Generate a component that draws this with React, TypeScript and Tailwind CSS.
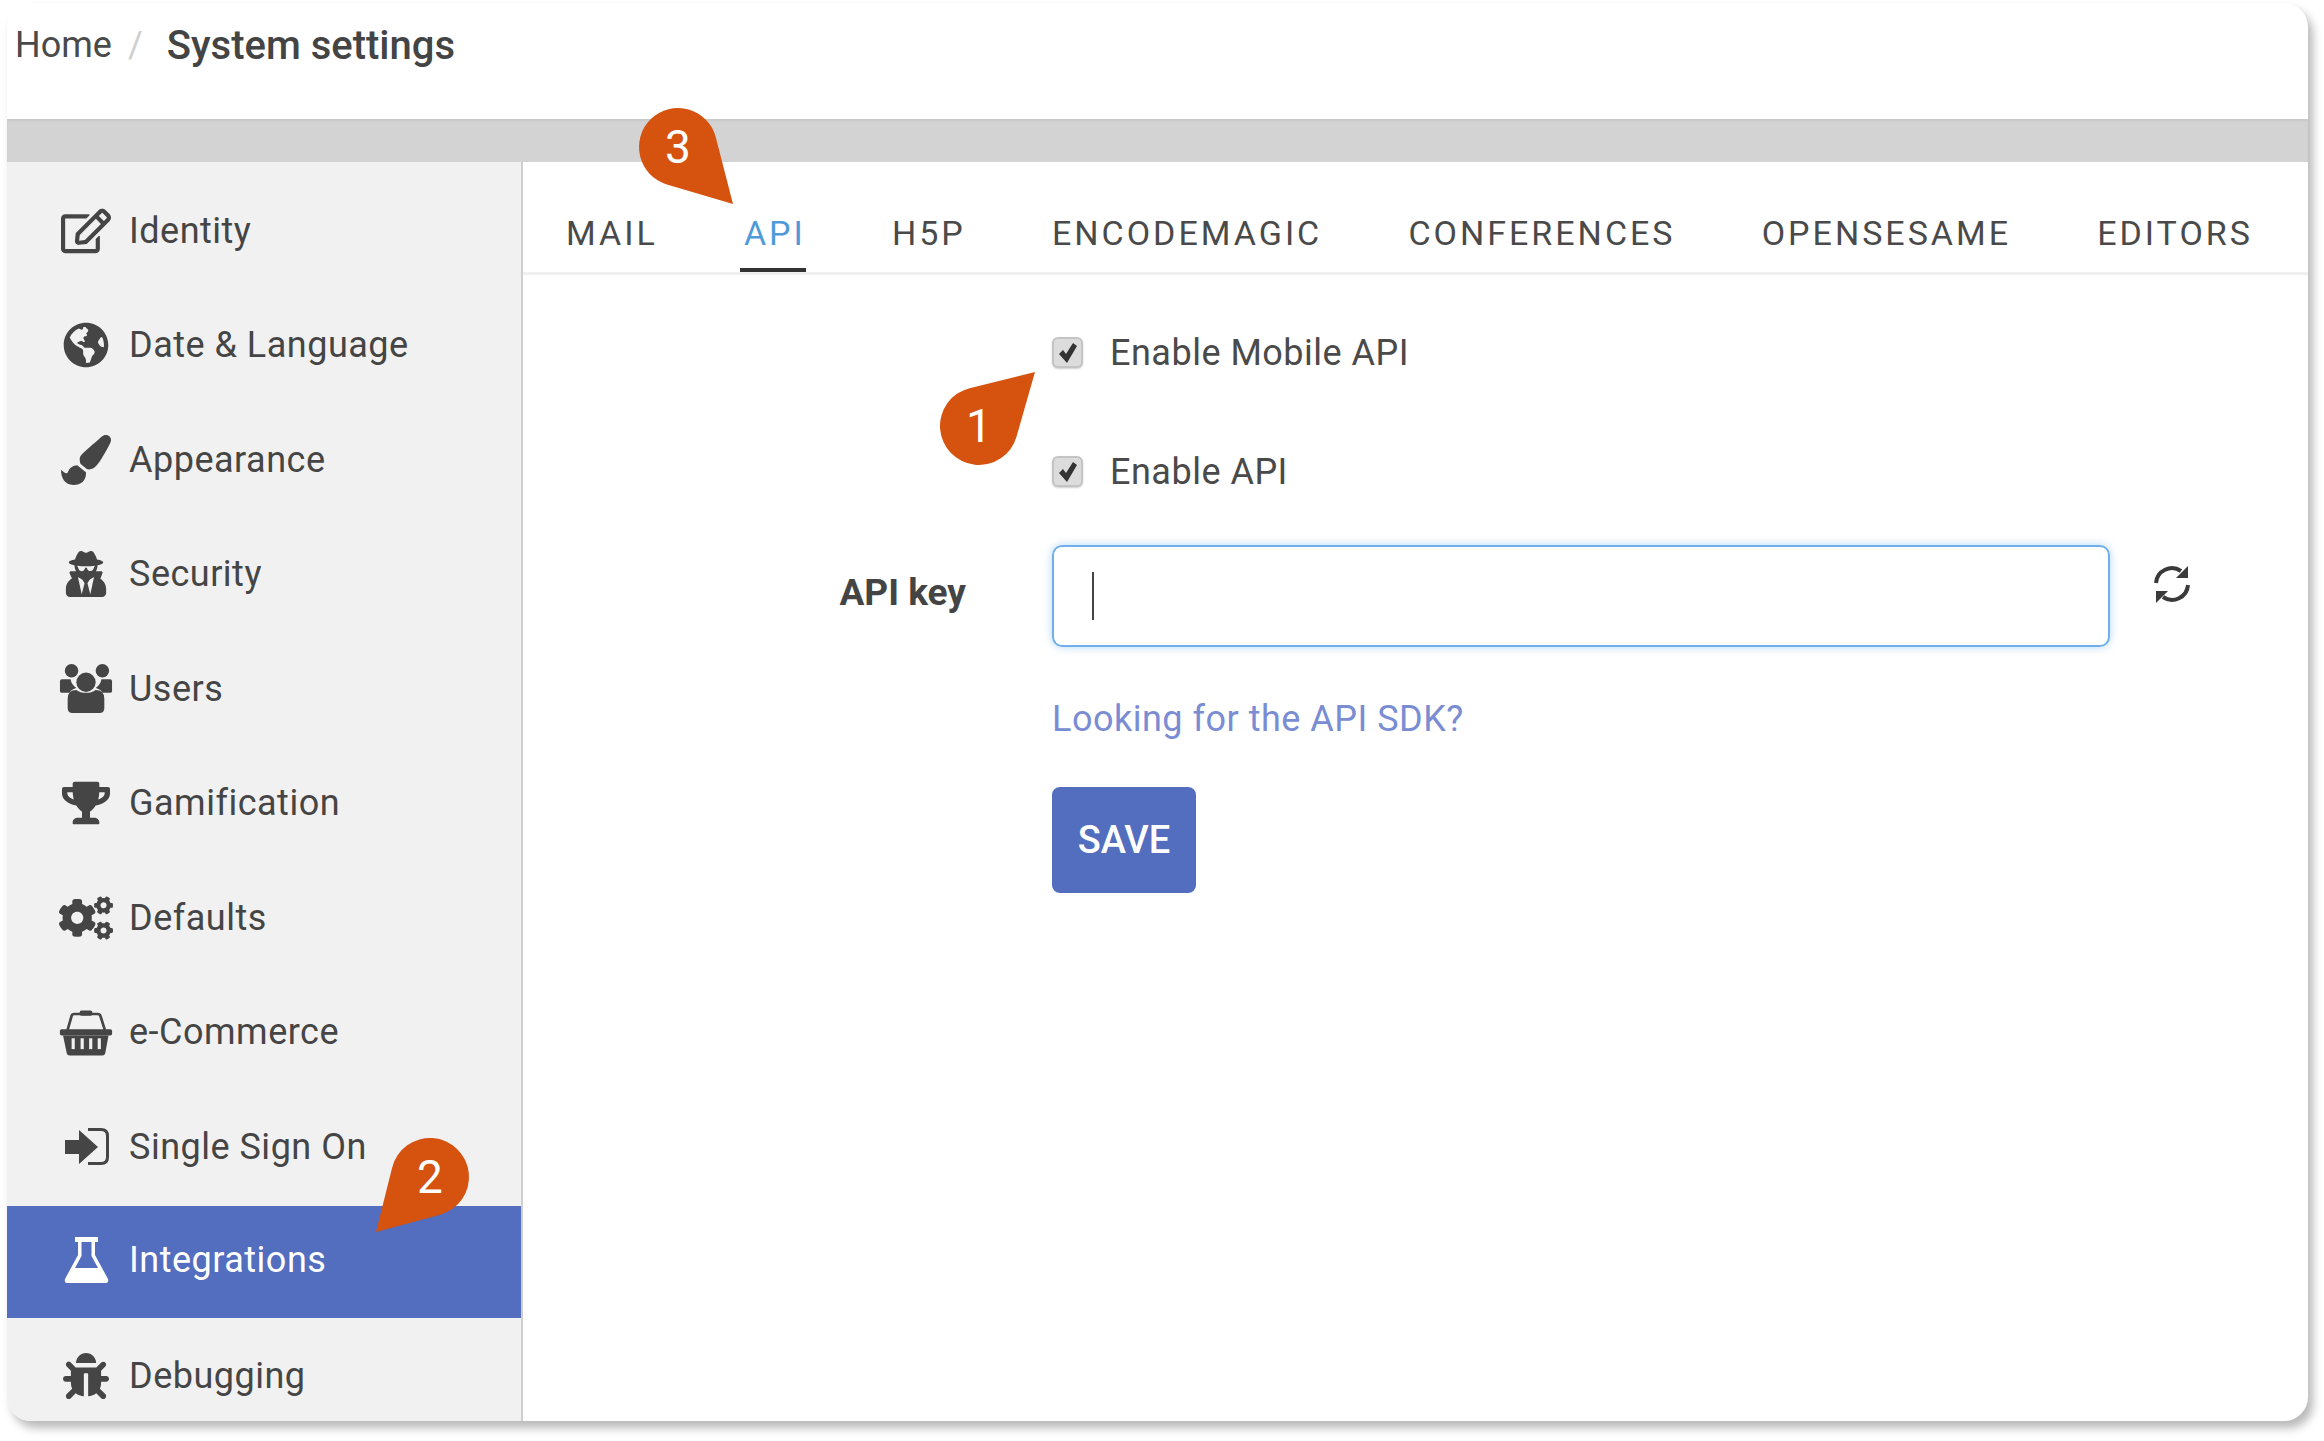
import React from 'react';
import { FaRegEdit, FaGlobeAmericas, FaPaintBrush, FaUserSecret, FaTrophy, FaCogs, FaBug } from 'react-icons/fa';

const UsersIcon = () => (
  <svg width="56" height="52" viewBox="0 0 56 52" fill="currentColor">
    <circle cx="13" cy="7" r="7" />
    <circle cx="45" cy="7" r="7" />
    <path d="M1 18q0-2 2-2h9q1 6 6 9-5 1-7 5H3q-2 0-2-2z" />
    <path d="M55 18q0-2-2-2h-9q-1 6-6 9 5 1 7 5h8q2 0 2-2z" />
    <circle cx="28" cy="19" r="10" />
    <path d="M9 36q0-9 9-9 4 3 10 3t10-3q9 0 9 9v10q0 5-5 5H14q-5 0-5-5z" />
  </svg>
);

const BasketIcon = () => (
  <svg width="60" height="52" viewBox="0 0 60 52" fill="currentColor">
    <path d="M9.5 24L14 8Q14.6 6 17 6H43Q45.4 6 46 8L51 24" fill="none" stroke="currentColor" strokeWidth="3" />
    <rect x="23" y="2" width="14" height="6" rx="2" />
    <rect x="1" y="23" width="58" height="7" rx="2" />
    <path d="M4.5 30H55L51.5 49Q51 52 48 52H12Q9 52 8.500 49Z" />
    <rect x="14" y="33" width="3.500" height="12" fill="#f1f1f1" />
    <rect x="24" y="33" width="3.500" height="12" fill="#f1f1f1" />
    <rect x="33.500" y="33" width="3.500" height="12" fill="#f1f1f1" />
    <rect x="43" y="33" width="3.500" height="12" fill="#f1f1f1" />
  </svg>
);

const SignInIcon = () => (
  <svg width="46" height="42" viewBox="0 0 46 42" fill="currentColor">
    <path d="M2 14H16V4L35 21 16 38V28H2z" />
    <path d="M25 3.500H38Q44.500 3.500 44.500 10V31Q44.500 37.500 38 37.500H25" fill="none" stroke="currentColor" strokeWidth="3" />
  </svg>
);

const FlaskIcon = () => (
  <svg width="47" height="47" viewBox="0 0 47 47" fill="currentColor">
    <rect x="12" y="0" width="23" height="5" />
    <path fillRule="evenodd" d="M15 5V18L2 42Q1 46 4 46H43Q46 46 45 42L32 18V5ZM18.500 5V19L12 31H35L28.500 19V5Z" />
  </svg>
);

const RefreshIcon = () => (
  <svg width="38" height="40" viewBox="0 0 38 40" fill="#3a3a3a" className="ml-[43px] -mt-[24px]">
    <path d="M3 19A16 16 0 0 1 28 7" fill="none" stroke="#3a3a3a" strokeWidth="4" />
    <path d="M35 2V14H23z" />
    <path d="M35 21A16 16 0 0 1 10 33" fill="none" stroke="#3a3a3a" strokeWidth="4" />
    <path d="M3 27H15L3 39z" />
  </svg>
);

const CheckIcon = () => (
  <svg width="20" height="22" viewBox="0 0 20 22" fill="#333">
    <path d="M1 12L5 8 8 12 15 1 19 4 9 21Z" />
  </svg>
);

const NAV = [
  { label: 'Identity', icon: <FaRegEdit size={50} /> },
  { label: 'Date & Language', icon: <FaGlobeAmericas size={46} /> },
  { label: 'Appearance', icon: <FaPaintBrush size={50} /> },
  { label: 'Security', icon: <FaUserSecret size={46} /> },
  { label: 'Users', icon: <UsersIcon /> },
  { label: 'Gamification', icon: <FaTrophy size={48} /> },
  { label: 'Defaults', icon: <FaCogs size={54} /> },
  { label: 'e-Commerce', icon: <BasketIcon /> },
  { label: 'Single Sign On', icon: <SignInIcon /> },
  { label: 'Integrations', icon: <FlaskIcon />, active: true },
  { label: 'Debugging', icon: <FaBug size={46} /> },
];

const TABS = ['MAIL', 'API', 'H5P', 'ENCODEMAGIC', 'CONFERENCES', 'OPENSESAME', 'EDITORS'];

// teardrop callout: circle with a tail running out to the tip
const Pin: React.FC<{ n: number; tx: number; ty: number; className: string }> = ({ n, tx, ty, className }) => {
  const r = 39;
  const cx = 49;
  const cy = 49;
  const dx = tx - cx;
  const dy = ty - cy;
  const d = Math.hypot(dx, dy);
  const th = Math.atan2(dy, dx);
  const a = Math.acos(r / d);
  const p1 = [cx + r * Math.cos(th - a), cy + r * Math.sin(th - a)];
  const p2 = [cx + r * Math.cos(th + a), cy + r * Math.sin(th + a)];
  return (
    <div className={`absolute w-[120px] h-[120px] ${className}`}>
      <svg width="120" height="120" className="absolute inset-0 overflow-visible">
        <path d={`M${tx} ${ty}L${p2[0]} ${p2[1]}A${r} ${r} 0 1 1 ${p1[0]} ${p1[1]}Z`} fill="#d5520f" />
      </svg>
      <span className="absolute left-[10px] top-[10px] w-[78px] h-[78px] flex items-center justify-center text-white text-[46px] leading-none">{n}</span>
    </div>
  );
};

const CheckRow: React.FC<{ label: string; className?: string }> = ({ label, className }) => (
  <div className={`h-[31px] flex items-center ${className ?? ''}`}>
    <span className="w-[31px] h-[31px] rounded-[6px] border-2 border-[#c4c4c4] bg-[#dcdcdc] flex items-center justify-center shadow-[0_1px_2px_rgba(0,0,0,0.2)]">
      <CheckIcon />
    </span>
    <span className="ml-[27px] text-[36px] leading-none tracking-[0.5px] text-[#4a4a4a]">{label}</span>
  </div>
);

export default function App() {
  return (
    <div className="relative w-[2324px] h-[1441px] bg-white pl-[7px] pt-[3px] overflow-hidden font-['Roboto',sans-serif]">
      <div className="w-[2301px] h-[1418px] rounded-[24px] overflow-hidden bg-white flex flex-col shadow-[5px_7px_10px_rgba(0,0,0,0.28)]">
        {/* Breadcrumb */}
        <header className="h-[116px] shrink-0 flex items-start pt-[21px] pl-[8px]">
          <span className="text-[36px] leading-[42px] text-[#4a4a4a]">Home</span>
          <span className="ml-[16px] text-[36px] leading-[42px] text-[#cfcfcf]">/</span>
          <span className="ml-[24px] mt-[1px] text-[40px] leading-[42px] font-medium text-[#444]">System settings</span>
        </header>
        <div className="h-[43px] shrink-0 bg-[#d3d3d3] shadow-[inset_0_2px_2px_rgba(0,0,0,0.05)]" />

        <div className="flex flex-1 min-h-0">
          {/* Sidebar */}
          <aside className="w-[516px] shrink-0 bg-[#f1f1f1] border-r-2 border-[#cfcfcf] pt-[13px]">
            {NAV.map(({ label, icon, active }) => (
              <div key={label} className={`flex items-center pl-[52px] pb-[3px] ${active ? 'h-[112.5px] mb-[2px] bg-[#536dbf] text-white' : 'h-[114.5px] text-[#454545]'}`}>
                <span className="w-[54px] shrink-0 flex justify-center">{icon}</span>
                <span className="ml-[16px] text-[36px] tracking-[0.5px]">{label}</span>
              </div>
            ))}
          </aside>

          {/* Content */}
          <main className="flex-1 min-w-0">
            <nav className="h-[113px] flex items-end gap-[86.2px] pl-[43px] border-b-[3px] border-[#f0f0f0]">
              {TABS.map((t) => (
                <div key={t} className={`h-[64px] pt-[3px] text-[34px] leading-[44px] tracking-[3px] ${t === 'API' ? 'pl-[4px] -ml-[4px] text-[#4f9bd9] border-b-4 border-[#333]' : 'text-[#4a4a4a]'}`}>{t}</div>
              ))}
            </nav>
            <div className="pt-[62px] pl-[529px]">
              <CheckRow label="Enable Mobile API" />
              <CheckRow label="Enable API" className="mt-[88px]" />
              <div className="relative mt-[58px] flex items-center">
                <label className="absolute right-[calc(100%+86px)] top-[26px] whitespace-nowrap text-[37px] leading-[44px] font-bold text-[#444]">API key</label>
                <div className="w-[1058px] h-[102px] rounded-[10px] border-2 border-[#6fb0ec] shadow-[0_0_8px_rgba(111,176,236,0.5)] flex items-center pl-[38px]">
                  <span className="w-[2px] h-[48px] bg-[#444]" />
                </div>
                <RefreshIcon />
              </div>
              <a className="block mt-[50px] text-[36px] leading-[44px] tracking-[0.5px] text-[#7a8dd3]">Looking for the API SDK?</a>
              <button className="mt-[46px] w-[144px] h-[106px] rounded-[8px] bg-[#536dbf] text-white text-[38px] font-medium">SAVE</button>
            </div>
          </main>
        </div>
      </div>

      <Pin n={3} tx={104} ty={106} className="left-[629px] top-[98px]" />
      <Pin n={2} tx={-5} ty={104} className="left-[381px] top-[1128px]" />
      <Pin n={1} tx={105} ty={-5} className="left-[930px] top-[377px]" />
    </div>
  );
}
